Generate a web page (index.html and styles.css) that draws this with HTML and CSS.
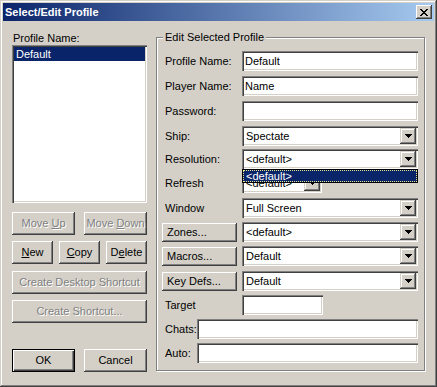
FILE: index.html
```html
<!DOCTYPE html>
<html lang="en">
<head>
	<meta charset="UTF-8">
	<title>Select/Edit Profile</title>
	<link rel="stylesheet" href="styles.css">
</head>
<body>
	<div class="window">
		<div class="titleBar">
			<span class="titleText">Select/Edit Profile</span>
			<span class="closeBtn">
				<svg width="8" height="7" viewBox="0 0 8 7"><path d="M0 0h2v1H0zM6 0h2v1H6zM1 1h2v1H1zM5 1h2v1H5zM2 2h4v1H2zM3 3h2v1H3zM2 4h4v1H2zM1 5h2v1H1zM5 5h2v1H5zM0 6h2v1H0zM6 6h2v1H6z" fill="#000"/></svg>
			</span>
		</div>
		<div class="dialogBody">
			<!-- profile list and its buttons -->
			<div class="leftCol">
				<div class="caption">Profile Name:</div>
				<div class="listBox">
					<div class="listItem selected">Default</div>
				</div>
				<div class="btnRow moveRow">
					<span class="btn half disabled"><span>Move <u>U</u>p</span></span>
					<span class="btn half disabled"><span>Move <u>D</u>own</span></span>
				</div>
				<div class="btnRow editRow">
					<span class="btn small"><span><u>N</u>ew</span></span>
					<span class="btn small"><span><u>C</u>opy</span></span>
					<span class="btn small"><span>D<u>e</u>lete</span></span>
				</div>
				<span class="btn wide disabled desktopBtn">Create Desktop Shortcut</span>
				<span class="btn wide disabled shortcutBtn">Create Shortcut...</span>
				<div class="btnRow okRow">
					<span class="btn half default">OK</span>
					<span class="btn half">Cancel</span>
				</div>
			</div>
			<!-- edit selected profile -->
			<div class="groupBox">
				<span class="groupTitle">Edit Selected Profile</span>
				<div class="row firstRow">
					<span class="label">Profile Name:</span>
					<span class="edit">Default</span>
				</div>
				<div class="row gap5">
					<span class="label">Player Name:</span>
					<span class="edit">Name</span>
				</div>
				<div class="row gap5">
					<span class="label">Password:</span>
					<span class="edit"></span>
				</div>
				<div class="row gap5">
					<span class="label">Ship:</span>
					<span class="combo"><span class="comboText">Spectate</span><span class="dropBtn"><svg width="7" height="4" viewBox="0 0 7 4"><path d="M0 0h7v1H0zM1 1h5v1H1zM2 2h3v1H2zM3 3h1v1H3z" fill="#000"/></svg></span></span>
				</div>
				<div class="row gap3">
					<span class="label">Resolution:</span>
					<span class="combo open"><span class="comboText">&lt;default&gt;</span><span class="dropBtn"><svg width="7" height="4" viewBox="0 0 7 4"><path d="M0 0h7v1H0zM1 1h5v1H1zM2 2h3v1H2zM3 3h1v1H3z" fill="#000"/></svg></span>
						<span class="dropList"><span class="dropItem">&lt;default&gt;</span></span>
					</span>
				</div>
				<div class="row">
					<span class="label">Refresh</span>
					<span class="combo short"><span class="comboText">&lt;default&gt;</span><span class="dropBtn"><svg width="7" height="4" viewBox="0 0 7 4"><path d="M0 0h7v1H0zM1 1h5v1H1zM2 2h3v1H2zM3 3h1v1H3z" fill="#000"/></svg></span></span>
				</div>
				<div class="row gap5">
					<span class="label">Window</span>
					<span class="combo"><span class="comboText">Full Screen</span><span class="dropBtn"><svg width="7" height="4" viewBox="0 0 7 4"><path d="M0 0h7v1H0zM1 1h5v1H1zM2 2h3v1H2zM3 3h1v1H3z" fill="#000"/></svg></span></span>
				</div>
				<div class="row">
					<span class="btn sideBtn">Zones...</span>
					<span class="combo"><span class="comboText">&lt;default&gt;</span><span class="dropBtn"><svg width="7" height="4" viewBox="0 0 7 4"><path d="M0 0h7v1H0zM1 1h5v1H1zM2 2h3v1H2zM3 3h1v1H3z" fill="#000"/></svg></span></span>
				</div>
				<div class="row">
					<span class="btn sideBtn">Macros...</span>
					<span class="combo"><span class="comboText">Default</span><span class="dropBtn"><svg width="7" height="4" viewBox="0 0 7 4"><path d="M0 0h7v1H0zM1 1h5v1H1zM2 2h3v1H2zM3 3h1v1H3z" fill="#000"/></svg></span></span>
				</div>
				<div class="row gap5">
					<span class="btn sideBtn">Key Defs...</span>
					<span class="combo"><span class="comboText">Default</span><span class="dropBtn"><svg width="7" height="4" viewBox="0 0 7 4"><path d="M0 0h7v1H0zM1 1h5v1H1zM2 2h3v1H2zM3 3h1v1H3z" fill="#000"/></svg></span></span>
				</div>
				<div class="row">
					<span class="label">Target</span>
					<span class="edit targetEdit"></span>
				</div>
				<div class="row">
					<span class="label shortLabel">Chats:</span>
					<span class="edit"></span>
				</div>
				<div class="row">
					<span class="label shortLabel">Auto:</span>
					<span class="edit"></span>
				</div>
			</div>
		</div>
	</div>
</body>
</html>
```

FILE: styles.css
```css
* {
	margin: 0;
	padding: 0;
	box-sizing: border-box;
}
body {
	background: #d4d0c8;
	font-family: "Liberation Sans", Arial, sans-serif;
	font-size: 11px;
	line-height: 13px;
	color: #000;
}
/* window frame */
.window {
	width: 437px;
	height: 387px;
	padding: 3px;
	background: #d4d0c8;
	box-shadow: inset -1px -1px #404040, inset 1px 1px #d4d0c8, inset -2px -2px #808080, inset 2px 2px #fff;
}
.titleBar {
	display: flex;
	align-items: center;
	justify-content: space-between;
	height: 18px;
	padding: 0 2px;
	background: linear-gradient(to right, #0a246a, #a6caf0);
	color: #fff;
	font-weight: bold;
}
.closeBtn {
	display: flex;
	align-items: center;
	justify-content: center;
	width: 16px;
	height: 14px;
	background: #d4d0c8;
	box-shadow: inset -1px -1px #404040, inset 1px 1px #fff, inset -2px -2px #808080;
}
.dialogBody {
	display: flex;
	gap: 9px;
	padding: 11px 0 0 9px;
}
/* left column */
.leftCol {
	display: flex;
	flex-direction: column;
	width: 135px;
}
.caption {
	height: 13px;
	padding-left: 1px;
}
.listBox {
	height: 158px;
	padding: 2px;
	background: #fff;
	box-shadow: inset 1px 1px #808080, inset 2px 2px #404040, inset -1px -1px #fff, inset -2px -2px #d4d0c8;
}
.listItem {
	height: 14px;
	padding-left: 2px;
	line-height: 14px;
}
.listItem.selected {
	background: #0a246a;
	color: #fff;
}
.btnRow {
	display: flex;
	justify-content: space-between;
}
.btn {
	display: flex;
	align-items: center;
	justify-content: center;
	height: 23px;
	background: #d4d0c8;
	box-shadow: inset -1px -1px #404040, inset 1px 1px #fff, inset -2px -2px #808080;
	white-space: nowrap;
}
.btn u {
	text-underline-offset: 1px;
}
.btn.disabled {
	color: #808080;
	text-shadow: 1px 1px 0 #fff;
}
.btn.default {
	box-shadow: inset 0 0 0 1px #000, inset 2px 2px #fff, inset -2px -2px #404040, inset -3px -3px #808080;
}
.half {
	width: 63px;
}
.small {
	width: 41px;
}
.wide {
	width: 135px;
}
.moveRow {
	margin-top: 9px;
}
.editRow {
	margin-top: 6px;
}
.desktopBtn {
	margin-top: 7px;
}
.shortcutBtn {
	margin-top: 6px;
}
.okRow {
	margin-top: 26px;
}
/* group box */
.groupBox {
	display: flex;
	flex-direction: column;
	width: 269px;
	height: 334px;
	margin-top: 5px;
	padding: 0 6px 0 8px;
	border: 1px solid #808080;
	box-shadow: inset 1px 1px #fff, 1px 1px #fff;
}
.groupTitle {
	align-self: flex-start;
	height: 13px;
	margin: -7px 0 0 -2px;
	padding: 0 2px;
	background: #d4d0c8;
}
.row {
	display: flex;
	align-items: center;
	height: 20px;
	margin-top: 4px;
}
.row.firstRow {
	margin-top: 7px;
}
.row.gap5 {
	margin-top: 5px;
}
.row.gap3 {
	margin-top: 3px;
}
.label {
	flex: none;
	width: 77px;
}
.label.shortLabel {
	width: 32px;
}
.edit {
	flex: 1;
	height: 20px;
	padding: 0 3px;
	background: #fff;
	line-height: 20px;
	box-shadow: inset 1px 1px #808080, inset 2px 2px #404040, inset -1px -1px #fff, inset -2px -2px #d4d0c8;
}
.edit.targetEdit {
	flex: none;
	width: 81px;
}
.combo {
	position: relative;
	display: flex;
	align-items: center;
	flex: 1;
	height: 20px;
	padding: 2px;
	background: #fff;
	box-shadow: inset 1px 1px #808080, inset 2px 2px #404040, inset -1px -1px #fff, inset -2px -2px #d4d0c8;
}
.combo.short {
	flex: none;
	width: 80px;
}
.comboText {
	flex: 1;
	padding-left: 2px;
}
.dropBtn {
	display: flex;
	align-items: center;
	justify-content: center;
	width: 16px;
	height: 16px;
	background: #d4d0c8;
	box-shadow: inset -1px -1px #404040, inset 1px 1px #d4d0c8, inset -2px -2px #808080, inset 2px 2px #fff;
}
.sideBtn {
	flex: none;
	justify-content: flex-start;
	width: 75px;
	height: 19px;
	margin: 0 5px 0 -3px;
	padding-left: 5px;
}
/* open list of the resolution box */
.dropList {
	position: absolute;
	left: 0;
	right: 0;
	top: 20px;
	z-index: 2;
	height: 14px;
	border: 1px solid #000;
	background: #fff;
}
.dropItem {
	display: block;
	height: 12px;
	padding-left: 2px;
	line-height: 11px;
	background: #0a246a;
	color: #fff;
	border: 1px dotted #e8e890;
}
```
